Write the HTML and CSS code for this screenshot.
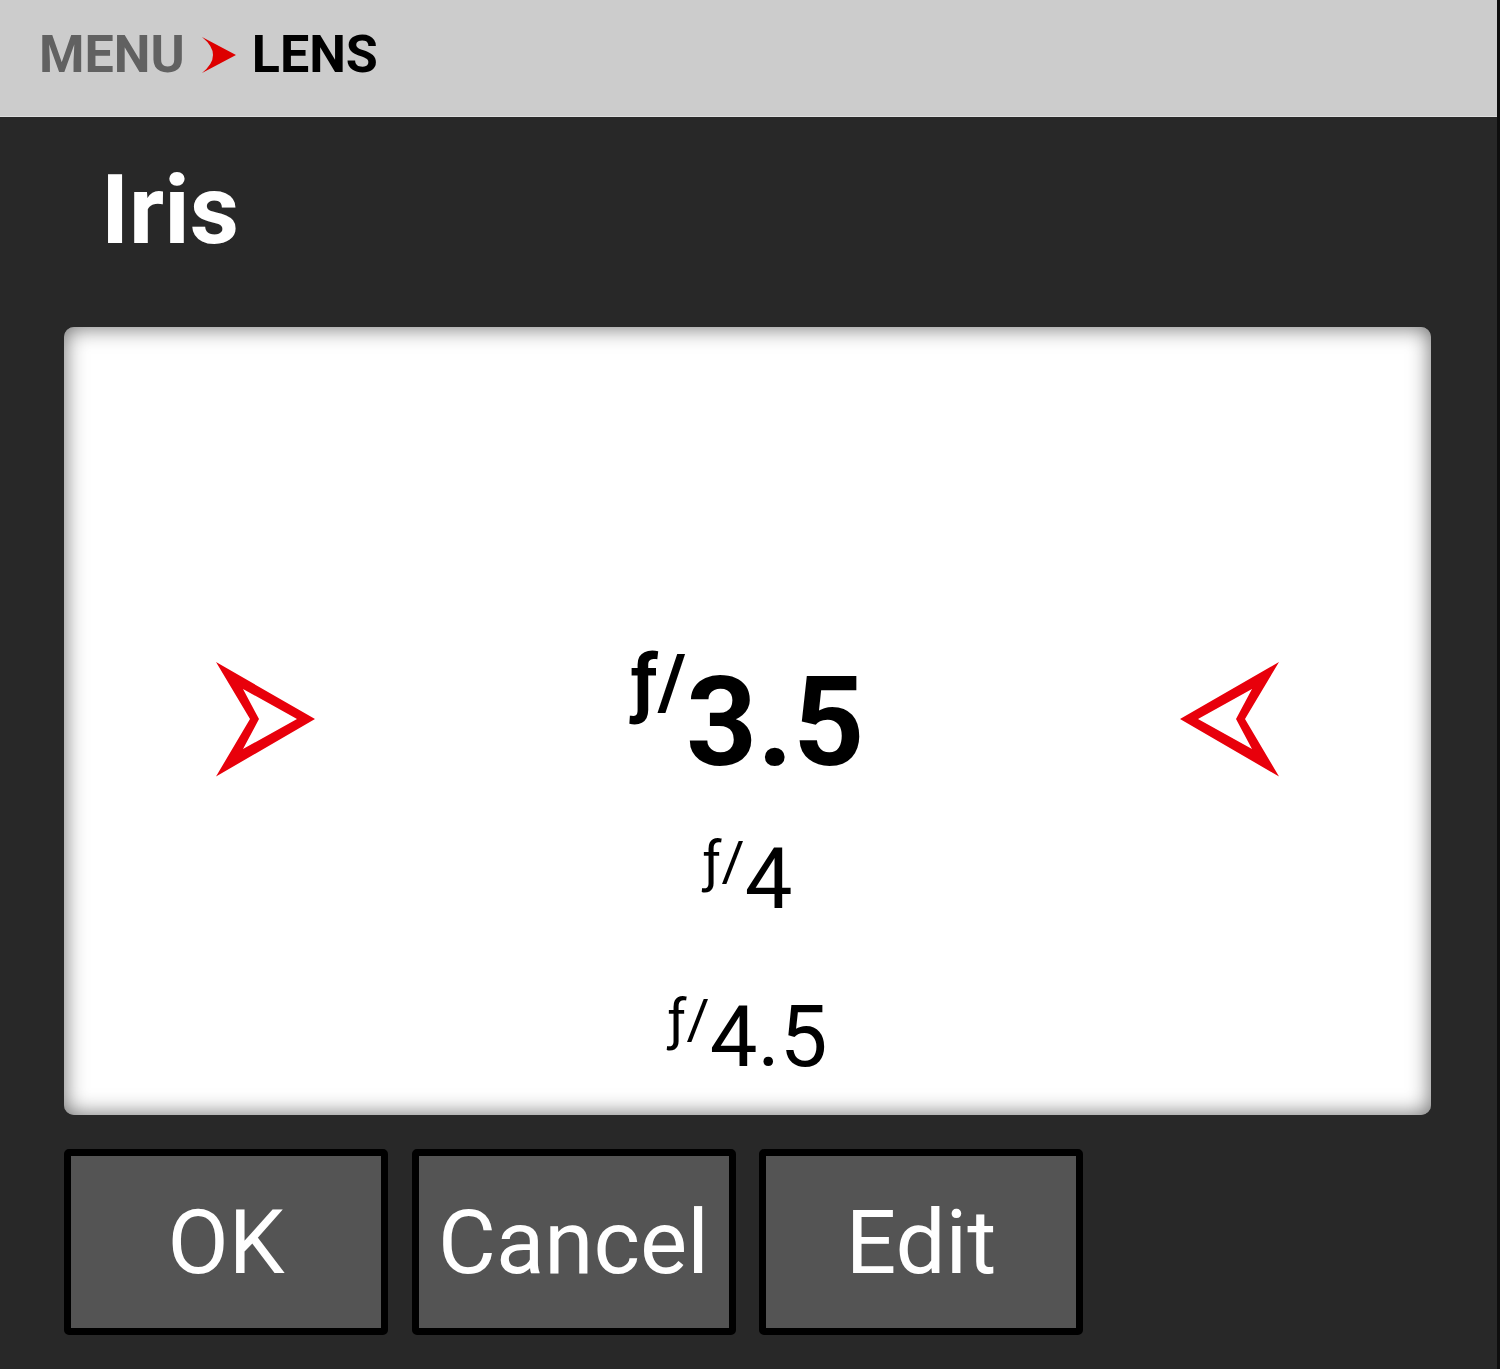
FILE: index.html
```html
<!DOCTYPE html>
<html lang="en">
<head>
    <meta charset="UTF-8">
    <meta name="viewport" content="width=device-width, initial-scale=1.0">
    <title>Lens - Iris</title>
    <link rel="stylesheet" href="styles.css">
</head>
<body>
    <div class="app">
        <header class="crumbs">
            <span class="crumb-parent">MENU</span>
            <svg class="crumb-sep" width="34" height="36" viewBox="0 0 34 36">
                <path d="M0,0 L34,18 L0,36 Q22,18 0,0 Z" fill="#dd0000"/>
            </svg>
            <span class="crumb-current">LENS</span>
        </header>

        <main class="panel">
            <h1 class="title">Iris</h1>

            <div class="picker">
                <div class="picker-row">
                    <svg class="pick-arrow" width="100" height="116" viewBox="0 0 100 116">
                        <path fill-rule="evenodd" fill="#e8000b"
                              d="M0,0 L99,57 L0,114.5 L34,57 Z M27,27 L43,57 L27,87 L81,57 Z"/>
                    </svg>
                    <div class="value value-main"><span class="fsign">ƒ/</span>3.5</div>
                    <svg class="pick-arrow" width="100" height="116" viewBox="0 0 100 116">
                        <path fill-rule="evenodd" fill="#e8000b"
                              d="M100,0 L1,57 L100,114.5 L66,57 Z M73,27 L57,57 L73,87 L19,57 Z"/>
                    </svg>
                </div>
                <div class="value value-next"><span class="fsign">ƒ/</span>4</div>
                <div class="value value-last"><span class="fsign">ƒ/</span>4.5</div>
            </div>

            <div class="actions">
                <button class="btn">OK</button>
                <button class="btn">Cancel</button>
                <button class="btn">Edit</button>
            </div>
        </main>
    </div>
</body>
</html>
```

FILE: styles.css
```css
body {
    margin: 0;
    background-color: #0e0e0e;
    font-family: Roboto, "Liberation Sans", sans-serif;
}

.app {
    width: 1497px;
    min-height: 1369px;
    background-color: #282828;
}

.crumbs {
    box-sizing: border-box;
    height: 117px;
    padding: 29px 0 0 39px;
    background-color: #cccccc;
    border-bottom: 1px solid #dcdcdc;
    display: flex;
    align-items: flex-start;
    font-size: 52px;
    font-weight: 700;
    line-height: 52px;
}

.crumb-parent {
    color: #616161;
}

.crumb-sep {
    margin: 8px 16px 0 17px;
}

.crumb-current {
    color: #000;
}

.panel {
    padding: 45px 0 0 0;
}

.title {
    margin: 0 0 69px 101px;
    font-size: 96px;
    line-height: 96px;
    font-weight: 700;
    color: #fff;
}

.picker {
    box-sizing: border-box;
    margin-left: 64px;
    width: 1367px;
    height: 788px;
    padding-top: 328px;
    background-color: #fff;
    border-radius: 10px;
    box-shadow: inset 0 0 22px rgba(0, 0, 0, 0.6);
    overflow: hidden;
}

.picker-row {
    height: 130px;
    padding: 0 152px;
    display: flex;
    justify-content: space-between;
    align-items: center;
}

.value {
    color: #000;
    text-align: center;
    white-space: nowrap;
}

.value-main {
    padding-top: 6px;
    font-size: 124px;
    font-weight: 700;
    line-height: 130px;
}

.value-next, .value-last {
    font-size: 85px;
    line-height: 100px;
}

.value-next {
    margin-top: 44px;
}

.value-last {
    margin-top: 58px;
}

.fsign {
    position: relative;
    line-height: 0;
}

.value-main .fsign {
    font-size: 0.61em;
    top: -0.75em;
}

.value-next .fsign, .value-last .fsign {
    font-size: 0.66em;
    top: -0.48em;
}

.actions {
    display: flex;
    gap: 23.5px;
    margin: 34px 0 0 64px;
}

.btn {
    box-sizing: border-box;
    width: 324px;
    height: 186px;
    padding: 0;
    background-color: #545454;
    border: 7px solid #000;
    border-radius: 5px;
    color: #fff;
    font-family: Roboto, "Liberation Sans", sans-serif;
    font-size: 89px;
    line-height: 1;
}
```
